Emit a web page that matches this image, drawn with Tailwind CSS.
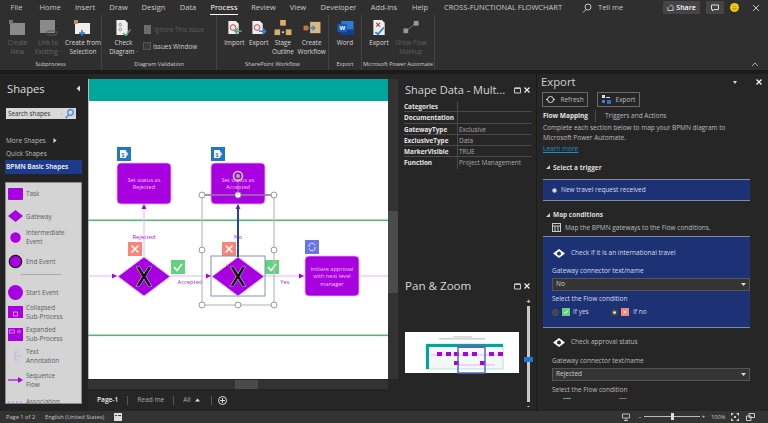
<!DOCTYPE html>
<html lang="en">
<head>
<meta charset="UTF-8">
<script src="https://cdn.jsdelivr.net/npm/@tailwindcss/browser@4"></script>
<title>Visio - Export</title>
</head>
<body class="bg-[#262626]">
<div class="w-[768px] h-[423px] overflow-hidden flex flex-col font-['Open_Sans',sans-serif] text-[#d0d0d0] bg-[#262626]">

  <!-- Ribbon -->
  <div class="h-[70px] shrink-0 bg-[#2f2f2f] flex flex-col whitespace-nowrap">
    <div class="h-[15px] shrink-0 flex items-center text-[7.5px] leading-[13px] text-[#c8c8c8] text-center">
      <span class="w-[33px]">File</span><span class="w-[34px]">Home</span><span class="w-[36px]">Insert</span><span class="w-[31px]">Draw</span><span class="w-[39px]">Design</span><span class="w-[30px]">Data</span>
      <span class="w-[42px]"><span class="inline-block text-white border-b border-white">Process</span></span><span class="w-[37px]">Review</span><span class="w-[32px]">View</span><span class="w-[49px]">Developer</span><span class="w-[42px]">Add-ins</span><span class="w-[30px]">Help</span>
      <span class="w-[136px]">CROSS-FUNCTIONAL FLOWCHART</span>
      <svg class="ml-[11px]" width="10" height="10" viewBox="0 0 10 10" fill="none" stroke="#c8c8c8"><circle cx="6" cy="4" r="3"/><path d="M4 6.5 1 9.5"/></svg>
      <span class="ml-[6px] w-[28px] text-left">Tell me</span>
      <div class="flex items-center ml-[37px]">
        <div class="w-[37px] h-[13px] bg-[#454545] rounded-[1px] flex items-center justify-center gap-[2px] text-white font-semibold text-[7px]">
          <svg width="7" height="7" viewBox="0 0 8 8" fill="none" stroke="#ddd"><path d="M1 3.5V7.5H7V3.5M3 3 5 1 7 3"/></svg>Share
        </div>
        <div class="ml-[6px] w-[18px] h-[13px] bg-[#454545] rounded-[1px] flex items-center justify-center">
          <svg width="8" height="8" viewBox="0 0 8 8" fill="none" stroke="#ddd"><path d="M.5 1H7.5V5.5H3L1.5 7V5.5H.5Z"/></svg>
        </div>
        <div class="ml-[6px] w-[9px] h-[9px] rounded-full bg-[#f2c511] flex items-center justify-center">
          <svg width="7" height="7" viewBox="0 0 7 7" fill="none" stroke="#7a5d00" stroke-width=".7"><path d="M1.5 4.3Q3.5 6.2 5.5 4.3M2.4 2V2.8M4.6 2V2.8"/></svg>
        </div>
        <svg class="ml-[13px]" width="8" height="8" viewBox="0 0 8 8" stroke="#c8c8c8"><path d="M1 1 7 7M7 1 1 7"/></svg>
      </div>
    </div>

    <div class="flex-1 min-h-0 flex text-[6.4px] leading-[9px] text-center relative">
      <!-- Subprocess -->
      <div class="w-[102px] border-r border-[#444] flex flex-col">
        <div class="flex-1 flex pl-[6px] pt-[5px]">
          <div class="w-[23px] flex flex-col items-center text-[#666]">
            <svg width="17" height="16" viewBox="0 0 17 16"><rect x="1" y="3" width="15" height="12" fill="#8a8a8a"/><rect x="0" y="0" width="4" height="4" fill="#777"/></svg>
            <span class="mt-[2px]">Create<br>New</span>
          </div>
          <div class="w-[32px] flex flex-col items-center text-[#666] ml-[3px]">
            <svg width="19" height="16" viewBox="0 0 19 16"><rect x="1" y="0" width="15" height="13" fill="#8a8a8a"/><rect x="8" y="11" width="10" height="4" rx="2" fill="none" stroke="#555"/></svg>
            <span class="mt-[2px]">Link to<br>Existing ·</span>
          </div>
          <div class="w-[36px] flex flex-col items-center text-[#d8d8d8] ml-[1px]">
            <svg width="18" height="16" viewBox="0 0 18 16"><rect x="1" y="3" width="15" height="11" fill="#eee"/><rect x="0" y="0" width="4" height="4" fill="#b8935a"/><path d="M8 10V16M5 13H11" stroke="#2f7fd6" stroke-width="1.6"/></svg>
            <span class="mt-[2px]">Create from<br>Selection</span>
          </div>
        </div>
        <div class="h-[10px] text-[5.6px] text-[#cfcfcf]">Subprocess</div>
      </div>
      <!-- Diagram Validation -->
      <div class="w-[115px] border-r border-[#444] flex flex-col">
        <div class="flex-1 flex pt-[5px] pl-[4px]">
          <div class="w-[35px] flex flex-col items-center text-[#d8d8d8]">
            <svg width="17" height="16" viewBox="0 0 17 17"><path d="M1 0H10L13 3V16H1Z" fill="#eee"/><circle cx="5" cy="5" r="1.4" fill="none" stroke="#888"/><circle cx="5" cy="10" r="1.4" fill="none" stroke="#888"/><path d="M8 14 11 16.5 16 10" fill="none" stroke="#5aa27c" stroke-width="1.6"/></svg>
            <span class="mt-[2px]">Check<br>Diagram ·</span>
          </div>
          <div class="flex flex-col ml-[2px] text-left">
            <div class="flex items-center gap-[3px] h-[14px] mt-[2px] text-[#5e5e5e]">
              <span class="ml-[1px] w-[7px] h-[9px] bg-[#6d6d6d]"></span><span>Ignore This Issue</span><span class="ml-[6px]">·</span>
            </div>
            <div class="flex items-center gap-[2px] h-[14px] mt-[3px] text-[#d0d0d0]">
              <span class="w-[8px] h-[8px] border border-[#555] bg-[#3a3a3a]"></span><span>Issues Window</span>
            </div>
          </div>
        </div>
        <div class="h-[10px] text-[5.6px] text-[#cfcfcf]">Diagram Validation</div>
      </div>
      <!-- SharePoint Workflow -->
      <div class="w-[112px] border-r border-[#444] flex flex-col">
        <div class="flex-1 flex pt-[5px] pl-[5px] text-[#d8d8d8]">
          <div class="w-[25px] flex flex-col items-center">
            <svg width="17" height="16" viewBox="0 0 17 17"><path d="M2 1H10L13 4V15H2Z" fill="#eee"/><circle cx="7" cy="8" r="3" fill="none" stroke="#c0392b"/><path d="M16 12H9M12 9 9 12 12 15" fill="none" stroke="#5aa27c" stroke-width="1.6"/></svg>
            <span class="mt-[2px]">Import</span>
          </div>
          <div class="w-[24px] flex flex-col items-center">
            <svg width="17" height="16" viewBox="0 0 17 17"><path d="M2 1H10L13 4V15H2Z" fill="#eee"/><circle cx="7" cy="8" r="3" fill="none" stroke="#c0392b"/><path d="M9 12H16M13 9 16 12 13 15" fill="none" stroke="#3a83d6" stroke-width="1.6"/></svg>
            <span class="mt-[2px]">Export</span>
          </div>
          <div class="w-[25px] flex flex-col items-center">
            <svg width="18" height="16" viewBox="0 0 18 17" fill="#dcae6a"><rect x="6" y="0" width="6" height="6"/><rect x="0" y="10" width="6" height="6"/><rect x="12" y="10" width="6" height="6"/><rect x="8" y="12" width="2" height="2" fill="#ddd"/></svg>
            <span class="mt-[2px]">Stage<br>Outline</span>
          </div>
          <div class="w-[33px] flex flex-col items-center">
            <svg width="18" height="16" viewBox="0 0 18 17"><rect x="7" y="2" width="11" height="12" fill="#dcb87e"/><rect x="0" y="6" width="5" height="5" fill="#d9702b"/><path d="M4 8.500H12M9.500 6 12 8.500 9.500 11" fill="none" stroke="#3a83d6" stroke-width="1.4"/></svg>
            <span class="mt-[2px]">Create<br>Workflow</span>
          </div>
        </div>
        <div class="h-[10px] text-[5.6px] text-[#cfcfcf]">SharePoint Workflow</div>
      </div>
      <!-- Export -->
      <div class="w-[33px] border-r border-[#444] flex flex-col">
        <div class="flex-1 flex flex-col items-center pt-[5px] text-[#d8d8d8]">
          <svg width="17" height="16" viewBox="0 0 17 17"><rect x="4" y="1" width="13" height="15" rx="1" fill="#2b7cd3"/><rect x="4" y="10" width="13" height="6" fill="#103f91"/><rect x="0" y="4" width="10" height="9" fill="#185abd"/><text x="2" y="11" font-size="6.500" font-weight="700" fill="#fff" font-family="Liberation Sans">W</text></svg>
          <span class="mt-[2px]">Word</span>
        </div>
        <div class="h-[10px] text-[5.6px] text-[#cfcfcf]">Export</div>
      </div>
      <!-- Power Automate -->
      <div class="w-[73px] border-r border-[#444] flex flex-col">
        <div class="flex-1 flex pt-[5px] pl-[5px]">
          <div class="w-[24px] flex flex-col items-center text-[#d8d8d8]">
            <svg width="17" height="16" viewBox="0 0 17 17"><path d="M2 0H11L14 3V16H2Z" fill="#eee"/><path d="M5 3 9 7M9 3 5 7" stroke="#c0392b" stroke-width="1.200"/><path d="M4 13 7 15 13 8" fill="none" stroke="#2f7fd6" stroke-width="1.800"/></svg>
            <span class="mt-[2px]">Export</span>
          </div>
          <div class="w-[36px] flex flex-col items-center text-[#5e5e5e] ml-[2px]">
            <svg width="18" height="16" viewBox="0 0 18 17"><path d="M5 11 13 4" stroke="#777"/><rect x="1" y="9" width="5" height="5" fill="#999"/><rect x="12" y="1" width="5" height="5" fill="#999"/></svg>
            <span class="mt-[2px]">Show Flow<br>Markup</span>
          </div>
        </div>
        <div class="h-[10px] text-[5.6px] text-[#cfcfcf]">Microsoft Power Automate</div>
      </div>
      <svg class="absolute right-[9px] bottom-[3px]" width="8" height="5" viewBox="0 0 8 5" fill="none" stroke="#aaa"><path d="M1 4 4 1 7 4"/></svg>
    </div>
  </div>
  <div class="h-[4px] shrink-0 bg-[#1b1b1b]"></div>

  <!-- Main -->
  <div class="flex-1 min-h-0 flex">

    <!-- Shapes panel -->
    <div class="w-[88px] shrink-0 flex flex-col pl-[5px] pr-[6px] bg-[#232323] whitespace-nowrap">
      <div class="flex items-center justify-between h-[24px] pl-[2px] pr-[1px] pt-[5px]">
        <span class="text-[11.2px] leading-[16px] text-[#dcdcdc]">Shapes</span>
        <svg width="5" height="7" viewBox="0 0 5 7" fill="#ddd"><path d="M4 .5V6.500L.5 3.500Z"/></svg>
      </div>
      <div class="mt-[10px] ml-[1px] w-[70px] h-[11px] bg-[#d8d8d8] flex items-center justify-between px-[2px] text-[6.300px] text-[#333]">
        <span>Search shapes</span>
        <span class="flex items-center gap-[3px]"><span class="text-[6px]">·</span>
          <svg width="9" height="10" viewBox="0 0 9 10" fill="none" stroke="#3a83d6" stroke-width="1.200"><circle cx="5.500" cy="3.500" r="2.800"/><path d="M3.500 5.800 .8 9"/></svg>
        </span>
      </div>
      <div class="mt-[15px] pl-[1px] text-[6.500px] leading-[13px] text-[#bdbdbd] flex flex-col">
        <span class="flex items-center gap-[7px]">More Shapes <svg width="4" height="5" viewBox="0 0 4 5" fill="#ddd"><path d="M.5 0 3.500 2.500.5 5Z"/></svg></span>
        <span>Quick Shapes</span>
      </div>
      <div class="h-[14px] bg-[#1e3a8a] text-white font-semibold text-[6.600px] leading-[14px] pl-[1px]">BPMN Basic Shapes</div>

      <div class="mt-[8px] h-[222px] overflow-hidden bg-[#d4d4d4] border border-[#8a8a8a] text-[6.400px] leading-[9px] text-[#5c5c5c]">
        <div class="flex flex-col pl-[2px] pt-[4px]">
          <div class="flex items-center gap-[3px] h-[13px]"><span class="w-[15px] h-[12px] bg-[#a800e0] rounded-[1px]"></span><span>Task</span></div>
          <div class="flex items-center gap-[3px] h-[12px] mt-[10px]">
            <svg width="15" height="12" viewBox="0 0 15 12"><path d="M7.500 0 15 6 7.500 12 0 6Z" fill="#a800e0"/></svg><span>Gateway</span></div>
          <div class="flex items-center gap-[3px] mt-[6px]">
            <svg width="15" height="15" viewBox="0 0 15 15"><circle cx="7.500" cy="7.500" r="6" fill="#a800e0" stroke="#f0c8ff" stroke-width="1.500"/></svg><span>Intermediate<br>Event</span></div>
          <div class="flex items-center gap-[3px] mt-[8px]">
            <svg width="15" height="15" viewBox="0 0 15 15"><circle cx="7.500" cy="7.500" r="6.200" fill="#a800e0" stroke="#1a1a1a" stroke-width="1.200"/></svg><span>End Event</span></div>
          <div class="w-[40px] h-[1px] bg-[#a8a8a8] mt-[5px] ml-[13px]"></div>
          <div class="flex items-center gap-[3px] mt-[10px]">
            <svg width="15" height="15" viewBox="0 0 15 15"><circle cx="7.500" cy="7.500" r="7.500" fill="#a800e0"/></svg><span>Start Event</span></div>
          <div class="flex items-center gap-[3px] mt-[3px]">
            <svg width="15" height="12" viewBox="0 0 15 12"><rect width="15" height="12" fill="#a800e0"/><rect x="5.500" y="6" width="4" height="4" fill="none" stroke="#f0c8ff" stroke-width=".7"/></svg><span>Collapsed<br>Sub-Process</span></div>
          <div class="flex items-center gap-[3px] mt-[4px]">
            <svg width="15" height="13" viewBox="0 0 15 13"><rect width="15" height="13" fill="#a800e0"/><rect x="1.500" y="2" width="5" height="3" fill="none" stroke="#f0c8ff" stroke-width=".6"/><path d="M9 3.500 11 2 13 3.500 11 5Z" fill="none" stroke="#f0c8ff" stroke-width=".6"/></svg><span>Expanded<br>Sub-Process</span></div>
          <div class="flex items-center gap-[3px] mt-[4px]">
            <svg width="15" height="12" viewBox="0 0 15 12" fill="none" stroke="#d9a0ef"><path d="M9 2H7V10H9M9 6H13"/></svg><span>Text<br>Annotation</span></div>
          <div class="flex items-center gap-[3px] mt-[6px]">
            <svg width="15" height="8" viewBox="0 0 15 8"><path d="M0 4H11" stroke="#a800e0" stroke-width="1.200"/><path d="M10 1 15 4 10 7Z" fill="#a800e0"/></svg><span>Sequence<br>Flow</span></div>
          <div class="flex items-center gap-[3px] mt-[8px]">
            <svg width="15" height="4" viewBox="0 0 15 4"><path d="M0 2H15" stroke="#c060e8" stroke-dasharray="1.500 2.500"/></svg><span>Association</span></div>
        </div>
      </div>
    </div>

    <!-- Drawing column -->
    <div class="w-[310px] shrink-0 flex flex-col pt-[5px] bg-[#262626]">
      <div class="flex">
        <svg class="block bg-white" width="300" height="300" viewBox="88 79 300 300" font-family="Open Sans" text-anchor="middle">
          <rect x="88" y="79" width="300" height="22" fill="#00a699"/>
          <rect x="88" y="79" width="1" height="300" fill="#bbb"/>
          <rect x="88" y="219.500" width="300" height="1.600" fill="#5cb27a"/>
          <rect x="88" y="334.500" width="300" height="1.600" fill="#5cb27a"/>
          <path d="M88 276H388M144 204V257" stroke="#e6b3f7" stroke-width="1"/>
          <g fill="#a800e0">
            <path d="M112 273.500 117 276 112 278.500ZM206 273.500 211 276 206 278.500ZM299 273.500 304 276 299 278.500ZM141.500 209 144 204 146.500 209ZM235.500 209 238 204 240.500 209Z"/>
          </g>

          <g fill="#a800e0" stroke="#e6b3f7" stroke-width=".8">
            <rect x="117" y="163" width="54" height="41" rx="4"/>
            <rect x="211" y="163" width="54" height="41" rx="4"/>
            <rect x="305" y="256" width="54" height="40" rx="4"/>
            <path d="M144 257 170 276.500 144 296 118 276.500Z"/>
            <path d="M238 257 264 276.500 238 296 212 276.500Z"/>
          </g>
          <g fill="#eecbfa" font-size="5.600">
            <text x="144" y="181.500">Set status as</text><text x="144" y="189">Rejected</text>
            <text x="238" y="181.500">Set status as</text><text x="238" y="189">Accepted</text>
            <text x="332" y="271">Initiate approval</text><text x="332" y="278.300">with next level</text><text x="332" y="285.600">manager</text>
          </g>
          <g fill="#a020d8" font-size="5.800">
            <text x="144" y="239">Rejected</text><text x="238" y="239">No</text>
            <text x="190" y="283.500">Accepted</text><text x="285" y="283.500">Yes</text>
          </g>
          <g font-family="Roboto" font-size="26" fill="#000" stroke="#fff" stroke-width=".7" paint-order="stroke">
            <text x="144" y="286">X</text><text x="238" y="286">X</text>
          </g>

          <!-- sharepoint badges -->
          <rect x="117" y="147" width="14" height="14" fill="#1f78c1"/>
          <rect x="120" y="150" width="6" height="8" fill="#fff"/>
          <path d="M126 151 128.500 154 126 157Z" fill="#cfe6f7"/>
          <text x="123" y="156.500" font-size="6" font-weight="700" fill="#1f78c1">S</text>
          <rect x="211" y="147" width="14" height="14" fill="#1f78c1"/>
          <rect x="214" y="150" width="6" height="8" fill="#fff"/>
          <path d="M220 151 222.500 154 220 157Z" fill="#cfe6f7"/>
          <text x="217" y="156.500" font-size="6" font-weight="700" fill="#1f78c1">S</text>
          <rect x="305" y="240" width="14" height="14" fill="#6a73ee"/>
          <path d="M309 247a3 3 0 0 1 6-1.500M315 247a3 3 0 0 1-6 1.500" fill="none" stroke="#fff" stroke-width=".8"/>

          <!-- red and green tags -->
          <g fill="#fb8378"><rect x="128" y="242" width="14" height="14"/><rect x="222" y="242" width="14" height="14"/></g>
          <path d="M131.500 245.500 138.500 252.500M138.500 245.500 131.500 252.500M225.500 245.500 232.500 252.500M232.500 245.500 225.500 252.500" stroke="#fff" stroke-width="1.600"/>
          <g fill="#62d27f"><rect x="171" y="260" width="14" height="14"/><rect x="265" y="260" width="14" height="14"/></g>
          <path d="M174 267 177 270.500 182 264M268 267 271 270.500 276 264" fill="none" stroke="#fff" stroke-width="1.600"/>

          <!-- selection -->
          <rect x="211" y="256" width="54" height="40" fill="none" stroke="#7f93c4" stroke-width="1"/>
          <rect x="202" y="195" width="72" height="110" fill="none" stroke="#bdbdbd" stroke-width="1.200"/>
          <path d="M238 205V257" stroke="#25459a" stroke-width="2"/>
          <path d="M203 195H273" stroke="#7c4a92" stroke-width="1"/>
          <g fill="#fff" stroke="#999" stroke-width="1">
            <circle cx="202" cy="195" r="3"/><circle cx="238" cy="195" r="3"/><circle cx="274" cy="195" r="3"/>
            <circle cx="202" cy="250" r="3"/><circle cx="274" cy="250" r="3"/>
            <circle cx="202" cy="305" r="3"/><circle cx="238" cy="305" r="3"/><circle cx="274" cy="305" r="3"/>
          </g>
          <path d="M238 180V195" stroke="#b08ac0" stroke-width=".8"/>
          <circle cx="238" cy="176" r="4.500" fill="none" stroke="#c8d0b8" stroke-width="1.600"/>
          <circle cx="238" cy="176" r="2" fill="#b0b4a0"/>
        </svg>
        <div class="w-[10px] h-[300px] bg-[#333] flex flex-col pt-[132px]">
          <div class="h-[82px] bg-[#4b4b4b]"></div>
        </div>
      </div>
      <div class="mt-[1px] h-[9px] w-[300px] bg-[#333] flex items-center">
        <span class="ml-[147px] w-[23px] h-[9px] bg-[#4b4b4b]"></span>
      </div>
      <div class="flex-1 flex items-center pl-[9px] text-[6.600px] text-[#aaa]">
        <span class="text-[#eee] font-semibold">Page-1</span>
        <span class="w-px h-[9px] bg-[#555] ml-[9px]"></span>
        <span class="ml-[9px]">Read me</span>
        <span class="w-px h-[9px] bg-[#555] ml-[9px]"></span>
        <span class="ml-[9px] flex items-center gap-[4px]">All <svg width="5" height="4" viewBox="0 0 5 4" fill="#ddd"><path d="M0 3.500 2.500 .5 5 3.500Z"/></svg></span>
        <span class="w-px h-[9px] bg-[#555] ml-[11px]"></span>
        <svg class="ml-[6px]" width="9" height="9" viewBox="0 0 9 9" fill="none" stroke="#ddd"><circle cx="4.500" cy="4.500" r="4"/><path d="M4.500 2V7M2 4.500H7"/></svg>
      </div>
    </div>

    <!-- Shape Data / Pan & Zoom -->
    <div class="w-[138px] shrink-0 flex flex-col bg-[#262626] whitespace-nowrap">
      <div class="h-[201px] pl-[6px] pr-[4px]">
        <div class="flex items-center justify-between h-[27px] pt-[5px]">
          <span class="pl-[1px] text-[11px] leading-[16px] text-[#d8d8d8]">Shape Data - Mult...</span>
          <span class="flex items-center gap-[3px] mr-[2px]">
            <svg width="7" height="7" viewBox="0 0 7 7" fill="none" stroke="#ccc"><path d="M.5 1.500H6.500V6H.5Z"/><path d="M.5 1H6.500" stroke-width="1.400"/></svg>
            <svg width="6" height="6" viewBox="0 0 6 6" stroke="#eee" stroke-width="1.200"><path d="M.5 .5 5.500 5.500M5.500 .5 .5 5.500"/></svg>
          </span>
        </div>
        <div class="text-[6.400px] leading-[11px] flex flex-col">
          <div class="flex h-[11.300px] border-b border-[#4a4a4a]"><span class="w-[54px] font-bold text-[#e4e4e4] border-r border-[#4a4a4a]">Categories</span></div>
          <div class="flex h-[11.300px] border-b border-[#4a4a4a]"><span class="w-[54px] font-bold text-[#e4e4e4] border-r border-[#4a4a4a]">Documentation</span></div>
          <div class="flex h-[11.300px] border-b border-[#4a4a4a]"><span class="w-[54px] font-bold text-[#e4e4e4] border-r border-[#4a4a4a]">GatewayType</span><span class="pl-[1px] text-[#aaa]">Exclusive</span></div>
          <div class="flex h-[11.300px] border-b border-[#4a4a4a]"><span class="w-[54px] font-bold text-[#e4e4e4] border-r border-[#4a4a4a]">ExclusiveType</span><span class="pl-[1px] text-[#aaa]">Data</span></div>
          <div class="flex h-[11.300px] border-b border-[#4a4a4a]"><span class="w-[54px] font-bold text-[#e4e4e4] border-r border-[#4a4a4a]">MarkerVisible</span><span class="pl-[1px] text-[#aaa]">TRUE</span></div>
          <div class="flex h-[11.300px]"><span class="w-[54px] font-bold text-[#e4e4e4] border-r border-[#4a4a4a]">Function</span><span class="pl-[1px] text-[#aaa]">Project Management</span></div>
        </div>
      </div>
      <div class="flex-1 pl-[7px] pr-[4px]">
        <div class="flex items-center justify-between h-[21px] pt-[1px]">
          <span class="text-[11.600px] leading-[16px] text-[#d8d8d8]">Pan &amp; Zoom</span>
          <span class="flex items-center gap-[3px] mr-[2px]">
            <svg width="7" height="7" viewBox="0 0 7 7" fill="none" stroke="#ccc"><path d="M.5 1.500H6.500V6H.5Z"/><path d="M.5 1H6.500" stroke-width="1.400"/></svg>
            <svg width="6" height="6" viewBox="0 0 6 6" stroke="#eee" stroke-width="1.200"><path d="M.5 .5 5.500 5.500M5.500 .5 .5 5.500"/></svg>
          </span>
        </div>
        <div class="flex mt-[3px]">
          <svg class="mt-[33px]" width="114" height="42" viewBox="0 0 114 42">
            <rect width="114" height="41" fill="#fff"/>
            <rect x="34" y="6" width="46" height="1.500" fill="#ccc"/><rect x="48" y="4" width="19" height="4" fill="#ddd"/>
            <rect x="21" y="12" width="77" height="25" fill="#f4f8f8" stroke="#8cc" stroke-width=".6"/>
            <rect x="21" y="12" width="77" height="3" fill="#00a699"/><rect x="21" y="12" width="3" height="25" fill="#00a699"/>
            <path d="M26 23H92M54 33H90" stroke="#e6b3f7"/>
            <g fill="#a800e0"><rect x="32" y="20" width="5" height="4"/><rect x="41" y="20" width="5" height="4"/><rect x="49" y="20" width="5" height="4"/><rect x="58" y="20" width="5" height="4"/><rect x="67" y="20" width="5" height="4"/><rect x="84" y="20" width="5" height="4"/><rect x="93" y="20" width="5" height="4"/><rect x="49" y="29" width="5" height="4"/><rect x="75" y="29" width="5" height="4"/></g>
            <rect x="53" y="14" width="27" height="27" fill="none" stroke="#5568c0" stroke-width="1.500"/>
            <rect x="53" y="14" width="27" height="2" fill="#5568c0"/>
          </svg>
          <div class="ml-[6px] flex flex-col items-center w-[7px]">
            <span class="text-[7px] leading-[6px] text-[#ddd] font-bold">+</span>
            <div class="w-[3px] h-[96px] bg-[#c8c8c8] mt-[1px] relative">
              <span class="absolute left-[-3px] top-[51px] w-[9px] h-[5px] bg-[#1d78d0]"></span>
            </div>
            <span class="text-[7px] leading-[8px] text-[#ddd] font-bold">-</span>
          </div>
        </div>
      </div>
    </div>

    <!-- Export panel -->
    <div class="flex-1 min-w-0 border-l border-[#1b1b1b] bg-[#262626] overflow-hidden relative text-[6.500px] leading-[9.500px] text-[#bdbdbd] whitespace-nowrap">
      <div class="flex items-start justify-between h-[18px] pl-[4px] pr-[6px]">
        <span class="text-[11.300px] leading-[16px] text-[#cfcfcf]">Export</span>
        <span class="flex items-center gap-[19px] mt-[5px]">
          <svg width="4" height="3" viewBox="0 0 4 3" fill="#ddd"><path d="M0 0H4L2 3Z"/></svg>
          <svg width="6" height="6" viewBox="0 0 6 6" stroke="#eee" stroke-width="1.400"><path d="M.5 .5 5.500 5.500M5.500 .5 .5 5.500"/></svg>
        </span>
      </div>
      <div class="flex gap-[9px] pl-[5px]">
        <div class="w-[46px] h-[15px] border border-[#6a6a6a] flex items-center justify-center gap-[5px]">
          <svg width="9" height="9" viewBox="0 0 9 9" fill="none" stroke="#ddd"><circle cx="4.500" cy="4.500" r="3"/><path d="M0 4.500H2M7 4.500H9"/></svg><span>Refresh</span>
        </div>
        <div class="w-[43px] h-[15px] border border-[#6a6a6a] flex items-center justify-center gap-[5px]">
          <svg width="9" height="9" viewBox="0 0 9 9"><rect x="0" y="0" width="3" height="3" fill="#ddd"/><rect x="0" y="5" width="3" height="3" fill="#3a83d6"/><rect x="5" y="5" width="4" height="4" fill="#2f6fc6"/><rect x="4" y="2" width="4" height="1" fill="#ddd"/></svg><span>Export</span>
        </div>
      </div>
      <div class="flex items-center h-[12px] mt-[3px] pl-[6px]">
        <span class="w-[52px] font-bold text-[#e4e4e4]">Flow Mapping</span>
        <span class="w-px h-[12px] bg-[#4a4a4a]"></span>
        <span class="ml-[9px]">Triggers and Actions</span>
      </div>
      <p class="mt-[1px] pl-[6px]">Complete each section below to map your BPMN diagram to<br>Microsoft Power Automate.</p>
      <p class="mt-[2px] pl-[6px] underline text-[#1d8fc4]">Learn more</p>
      <div class="mt-[9px] flex items-center pl-[9px] gap-[3px] font-bold text-[#dcdcdc]"><svg width="4" height="4" viewBox="0 0 4 4" fill="#ccc"><path d="M4 0V4H0Z"/></svg><span>Select a trigger</span></div>
      <div class="mt-[7px] ml-[6px] w-[207px] h-[22px] bg-[#1c3274] flex items-center border-y border-y-[#7f8aa8] pl-[9px] gap-[4px] text-[#d8dcea]">
        <span class="w-[5px] h-[5px] rounded-full bg-[#e8e8e8] border border-[#999]"></span><span>New travel request received</span>
      </div>
      <div class="mt-[9px] flex items-center pl-[9px] gap-[3px] font-bold text-[#dcdcdc]"><svg width="4" height="4" viewBox="0 0 4 4" fill="#ccc"><path d="M4 0V4H0Z"/></svg><span>Map conditions</span></div>
      <div class="mt-[3px] flex items-center pl-[15px] gap-[4px]">
        <svg width="9" height="9" viewBox="0 0 9 9" fill="none" stroke="#ccc"><rect x=".5" y=".5" width="8" height="8"/><path d="M.5 3H8.500M3 3V8.500M6 3V8.500"/></svg><span>Map the BPMN gateways to the Flow conditions.</span>
      </div>
      <div class="mt-[4px] ml-[6px] w-[207px] h-[92px] bg-[#1c3274] border-y border-y-[#7f8aa8] pt-[10px] text-[#d8dcea]">
        <div class="flex items-center pl-[10px] gap-[6px] h-[12px]">
          <svg width="12" height="9" viewBox="0 0 12 9"><path d="M6 0 12 4.500 6 9 0 4.500Z" fill="#fff"/><circle cx="6" cy="4.500" r="2" fill="#1c3274"/></svg><span>Check if it is an international travel</span>
        </div>
        <div class="mt-[7px] pl-[9px]">Gateway connector text/name</div>
        <div class="mt-[2px] ml-[9px] w-[198px] h-[13px] bg-[#353535] border border-[#555] flex items-center justify-between pl-[3px] pr-[3px] text-[#d0d0d0]">
          <span>No</span><svg width="5" height="3" viewBox="0 0 5 3" fill="#ddd"><path d="M0 0H5L2.500 3Z"/></svg>
        </div>
        <div class="mt-[3px] pl-[9px]">Select the Flow condition</div>
        <div class="mt-[4px] flex items-center pl-[9px] h-[10px]">
          <span class="w-[7px] h-[7px] rounded-full bg-[#444] border border-[#555]"></span>
          <span class="ml-[3px] w-[8px] h-[8px] bg-[#62d27f] flex items-center justify-center"><svg width="6" height="6" viewBox="0 0 6 6" fill="none" stroke="#fff"><path d="M1 3 2.500 4.500 5 1.500"/></svg></span>
          <span class="ml-[3px] w-[38px]">If yes</span>
          <span class="w-[7px] h-[7px] rounded-full bg-[#ddd] border-2 border-[#444]"></span>
          <span class="ml-[3px] w-[8px] h-[8px] bg-[#fb8378] flex items-center justify-center"><svg width="6" height="6" viewBox="0 0 6 6" stroke="#fff"><path d="M1.500 1.500 4.500 4.500M4.500 1.500 1.500 4.500"/></svg></span>
          <span class="ml-[4px]">If no</span>
        </div>
      </div>
      <div class="mt-[8px] flex items-center pl-[16px] gap-[6px] h-[12px]">
        <svg width="12" height="9" viewBox="0 0 12 9"><path d="M6 0 12 4.500 6 9 0 4.500Z" fill="#fff"/><circle cx="6" cy="4.500" r="2" fill="#262626"/></svg><span>Check approval status</span>
      </div>
      <div class="mt-[8px] pl-[15px]">Gateway connector text/name</div>
      <div class="mt-[2px] ml-[15px] w-[198px] h-[13px] bg-[#353535] border border-[#555] flex items-center justify-between pl-[3px] pr-[3px] text-[#d0d0d0]">
        <span>Rejected</span><svg width="5" height="3" viewBox="0 0 5 3" fill="#ddd"><path d="M0 0H5L2.500 3Z"/></svg>
      </div>
      <div class="mt-[4px] pl-[15px]">Select the Flow condition</div>
      <div class="mt-[4px] flex pl-[26px]">
        <span class="w-[8px] h-[1px] bg-[#62a277]"></span><span class="ml-[48px] w-[8px] h-[1px] bg-[#a85d58]"></span>
      </div>
    </div>
  </div>

  <!-- Status bar -->
  <div class="h-[12px] shrink-0 bg-[#333333] flex items-center pl-[6px] pr-[13px] text-[5.700px] text-[#c4c4c4] whitespace-nowrap">
    <span class="w-[29px]">Page 1 of 2</span>
    <span class="ml-[10px]">English (United States)</span>
    <svg class="ml-[10px]" width="8" height="8" viewBox="0 0 8 8"><rect width="8" height="8" fill="#ddd"/><rect y="2" x="1" width="2" height="1" fill="#444"/><rect y="2" x="4" width="3" height="1" fill="#444"/></svg>
    <div class="ml-auto flex items-center">
      <svg width="8" height="8" viewBox="0 0 8 8" fill="none" stroke="#bbb"><path d="M.5 1H7.500V5H.5ZM4 5V7.500M2 7.500H6"/></svg>
      <span class="ml-[9px] font-bold">-</span>
      <div class="ml-[3px] w-[56px] h-px bg-[#bbb] relative"><span class="absolute left-[27px] -top-[3px] w-[3px] h-[7px] bg-[#ddd]"></span></div>
      <span class="ml-[2px] font-bold">+</span>
      <span class="ml-[6px] w-[14px]">100%</span>
      <svg class="ml-[6px]" width="8" height="8" viewBox="0 0 8 8" fill="#ccc"><path d="M0 0H3L0 3ZM8 0V3L5 0ZM0 8V5L3 8ZM8 8H5L8 5Z"/><rect x="3" y="3" width="2" height="2"/></svg>
      <svg class="ml-[7px]" width="9" height="8" viewBox="0 0 9 8" fill="none" stroke="#ccc"><path d="M3 .5H8.500V4.500H3ZM.5 3H5V7.500H.5Z"/></svg>
    </div>
  </div>
</div>
</body>
</html>
